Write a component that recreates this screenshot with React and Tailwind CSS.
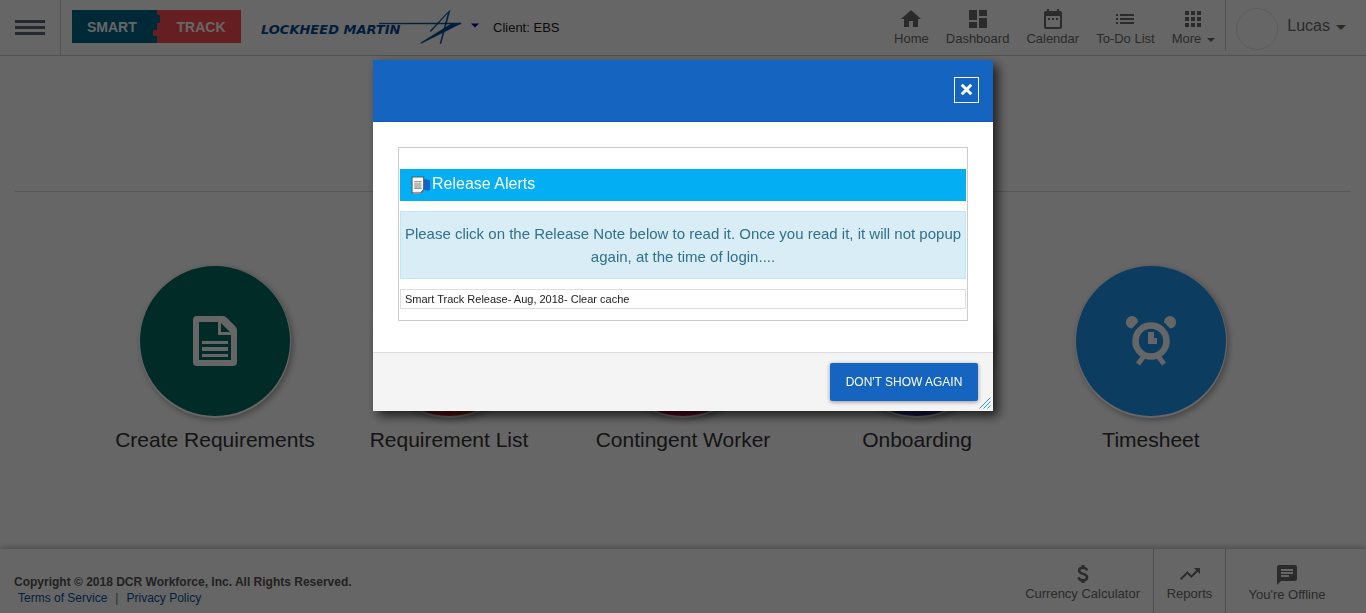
import React from "react";
import {
  MdHome,
  MdDashboard,
  MdDateRange,
  MdList,
  MdApps,
  MdTrendingUp,
  MdChat,
} from "react-icons/md";

const NAV = [
  { label: "Home", Icon: MdHome },
  { label: "Dashboard", Icon: MdDashboard },
  { label: "Calendar", Icon: MdDateRange },
  { label: "To-Do List", Icon: MdList },
  { label: "More", Icon: MdApps, caret: true },
];

function Caret({ className = "" }) {
  return (
    <svg viewBox="0 0 10 5" className={className} aria-hidden="true">
      <path d="M0 0h10L5 5z" fill="currentColor" />
    </svg>
  );
}

function SmartTrackLogo() {
  return (
    <a href="#home" className="grid h-[33px] w-[169px] text-sm font-bold text-white">
      <svg viewBox="0 0 169 33" className="col-start-1 row-start-1 h-[33px] w-[169px]" aria-hidden="true">
        <path d="M0 0h169v33H0z" fill="#ff4e52" />
        <path d="M0 0h85v5h3v8h-3v7h-4v6h4v7H0z" fill="#00688c" />
      </svg>
      <span className="col-start-1 row-start-1 grid grid-cols-2 items-center">
        <span className="pl-[15px]">SMART</span>
        <span className="pl-5">TRACK</span>
      </span>
    </a>
  );
}

function LockheedLogo() {
  return (
    <div className="ml-5 flex h-[54px] items-center text-[#004b93]">
      <span className="mt-1 w-[166px] whitespace-nowrap font-['DejaVu_Sans'] text-[13px] leading-4 font-bold italic">
        LOCKHEED MARTIN
      </span>
      <svg viewBox="0 0 84 36" className="-ml-[48px] h-9 w-[84px] shrink-0" aria-hidden="true">
        <path
          d="M0 13.2L82 13v1L0 13.900z M82 13.400L42 33.500L41.500 33L72 14z M71 0.500L52 21.500L51 21L67 4z M71 0.500L62 33.500H61L69 3.500z"
          fill="currentColor"
          stroke="currentColor"
          strokeWidth="0.500"
        />
      </svg>
    </div>
  );
}

function DollarIcon({ className }) {
  return (
    <svg viewBox="0 0 24 24" className={className} fill="none" stroke="currentColor" aria-hidden="true">
      <path d="M16 8.500C15.600 6.800 14.200 5.700 12 5.700c-2.400 0-3.900 1.100-3.900 2.900 0 4.300 8 2.300 8 6.700 0 1.900-1.600 3-4.100 3-2.600 0-4.200-1.200-4.500-3.100" strokeWidth="2.500" />
      <path d="M12 3v3M12 18v3" strokeWidth="3" />
    </svg>
  );
}

function DocIcon() {
  return (
    <svg viewBox="0 0 44 50" className="h-[50px] w-11" aria-hidden="true">
      <path
        fill="#fff"
        fillRule="evenodd"
        d="M4 0h26q2 0 4 2l8 8q2 2 2 4v32q0 4-4 4H4q-4 0-4-4V4q0-4 4-4zM6 6v38h32V19H25V6zM28 7v9h9z"
      />
      <path fill="#fff" d="M9 25h26v3H9zM9 31h26v4H9zM9 38h26v3H9z" />
    </svg>
  );
}

function ClockIcon() {
  return (
    <svg viewBox="0 0 50 50" className="size-[50px]" aria-hidden="true">
      <circle cx="25" cy="25" r="15.500" fill="none" stroke="#fff" strokeWidth="6.500" />
      <path d="M0 6a6 6 0 0 1 12 0L6 12.500A6 6 0 0 1 0 6zM38 6a6 6 0 0 1 12 0 6 6 0 0 1-6 6.500z" fill="#fff" />
      <path d="M22 16h6v6h3v6h-9z" fill="#fff" />
      <path d="M18 40l-6 8M32 40l6 8" stroke="#fff" strokeWidth="5" />
    </svg>
  );
}

const TILES = [
  { label: "Create Requirements", color: "bg-[#006b62]", Icon: DocIcon },
  { label: "Requirement List", color: "bg-[#d32f2f]", Icon: DocIcon },
  { label: "Contingent Worker", color: "bg-[#c2185b]", Icon: DocIcon },
  { label: "Onboarding", color: "bg-[#303f9f]", Icon: DocIcon },
  { label: "Timesheet", color: "bg-[#1e96ee]", Icon: ClockIcon },
];

function Header() {
  return (
    <header className="flex h-14 items-center border-b border-[#ccc] bg-white">
      <button type="button" aria-label="Menu" className="flex h-[55px] w-[61px] flex-col gap-[3px] border-r border-[#ccc] pt-5 pl-[15px]">
        <span className="h-[3px] w-[30px] bg-[#5c6474]" />
        <span className="h-[3px] w-[30px] bg-[#5c6474]" />
        <span className="h-[3px] w-[30px] bg-[#5c6474]" />
      </button>
      <div className="pb-[2px] pl-[11px]">
        <SmartTrackLogo />
      </div>
      <LockheedLogo />
      <Caret className="mb-1 ml-2 h-[5px] w-2 text-[#0000b8]" />
      <span className="ml-[14px] text-[13px] text-[#222]">Client: EBS</span>
      <nav className="ml-auto flex h-[50px] gap-[17px] self-start border-r border-[#ccc] pr-[10px] text-[13px] text-[#6b6b6b]">
        {NAV.map(({ label, Icon, caret }) => (
          <a key={label} href={"#" + label.toLowerCase()} className="flex flex-col items-center pt-[7px]">
            <Icon className="size-6" />
            <span className="flex items-center leading-4">
              {label}
              {caret && <Caret className="mt-[2px] ml-[6px] h-1 w-2" />}
            </span>
          </a>
        ))}
      </nav>
      <span className="mt-[2px] ml-[10px] size-[42px] rounded-full border border-[#e6e6e6]" />
      <button type="button" className="mr-5 mb-1 ml-[9px] flex items-center text-base text-[#6b6b6b]">
        Lucas
        <Caret className="mt-1 ml-[6px] h-[5px] w-[10px]" />
      </button>
    </header>
  );
}

function Footer() {
  const item = "flex flex-col items-center text-[13px] leading-4";
  return (
    <footer className="flex h-16 bg-white text-[#6b6b6b] shadow-[0_-1px_6px_rgba(0,0,0,0.3)]">
      <div className="pt-[25px] pl-[14px] text-xs leading-4">
        <p className="font-bold text-[#555]">Copyright © 2018 DCR Workforce, Inc. All Rights Reserved.</p>
        <p className="pl-1">
          <a href="#terms" className="text-[#0e4f9e]">Terms of Service</a>
          <span className="mx-2">|</span>
          <a href="#privacy" className="text-[#0e4f9e]">Privacy Policy</a>
        </p>
      </div>
      <a href="#currency" className={item + " ml-auto pt-[13px] pr-[13px]"}>
        <DollarIcon className="size-6" />
        Currency Calculator
      </a>
      <a href="#reports" className={item + " w-[72px] border-l border-[#bbb] pt-[13px]"}>
        <MdTrendingUp className="size-6" />
        Reports
      </a>
      <a href="#chat" className={item + " w-[141px] border-l border-[#bbb] pt-[14px] pr-[18px]"}>
        <MdChat className="size-6" />
        You're Offline
      </a>
    </footer>
  );
}

function ReleaseIcon() {
  return (
    <svg viewBox="0 0 18 18" className="size-[19px]" aria-hidden="true">
      <path d="M11 3h3l4 1v9l-3 1-4-2z" fill="#1663c7" />
      <path d="M1 1h11v12l-3 3H1z" fill="#fff" stroke="#47606e" />
      <path d="M2 15h7v2H2z" fill="#999" />
      <path d="M3 5.500h7M3 7.500h7M3 9.500h7M3 11.500h7" stroke="#777" />
    </svg>
  );
}

function ReleaseDialog() {
  return (
    <div className="fixed inset-0 flex items-start justify-center bg-black/60 pt-[60px]">
      <section
        role="dialog"
        aria-modal="true"
        aria-label="Release Alerts"
        className="relative w-full max-w-[620px] bg-white shadow-[5px_5px_10px_rgba(0,0,0,0.7)]"
      >
        <header className="flex h-[62px] items-start justify-end border-b border-[#0f58b5] bg-[#1565c0] pt-[17px] pr-[14px]">
          <button type="button" aria-label="Close" className="flex h-[26px] w-[25px] items-center justify-center border border-white">
            <svg viewBox="0 0 11 11" className="mb-px size-[13px]" aria-hidden="true">
              <path d="M1.500 1.500l8 8M9.500 1.500l-8 8" stroke="#fff" strokeWidth="2.500" />
            </svg>
          </button>
        </header>
        <div className="px-[25px] pt-[25px] pb-[31px]">
          <div className="border border-[#ccc] px-px pt-[21px] pb-[11px]">
            <h1 className="flex h-8 items-center bg-[#03aef2] pl-[11px] text-base text-white">
              <ReleaseIcon />
              <span className="mb-[3px] ml-[2px]">Release Alerts</span>
            </h1>
            <p className="mt-[10px] border border-[#bce8f1] bg-[#d9edf7] py-[10px] text-center text-[15px] leading-[23px] text-[#31708f]">
              Please click on the Release Note below to read it. Once you read it, it will not popup again, at the time of login....
            </p>
            <a href="#release" className="mt-[10px] block border border-[#ddd] px-1 text-[11px] leading-[18px] text-[#222]">
              Smart Track Release- Aug, 2018- Clear cache
            </a>
          </div>
        </div>
        <footer className="flex h-[59px] items-center justify-end border-t border-[#ddd] bg-[#f4f4f4] pr-[15px]">
          <button type="button" className="h-[38px] w-[148px] rounded-[2px] bg-[#1565c0] text-xs text-white shadow-[0_1px_4px_rgba(0,0,0,0.4)]">
            DON'T SHOW AGAIN
          </button>
        </footer>
        <svg viewBox="0 0 12 12" className="absolute right-[2px] bottom-[2px] size-3 text-[#3a8fd6]" aria-hidden="true">
          <path d="M0.500 11.500l11-11M4.500 11.500l7-7M8.500 11.500l3-3" fill="none" stroke="currentColor" />
        </svg>
      </section>
    </div>
  );
}

export default function App() {
  return (
    <div className="flex min-h-screen flex-col bg-white font-['Liberation_Sans',Arial,sans-serif]">
      <Header />
      <main className="flex-1">
        <hr className="mx-[15px] mt-[135px] border-t border-[#d6d6d6]" />
        <ul className="mx-auto mt-[74px] grid max-w-[1170px] grid-cols-5">
          {TILES.map(({ label, color, Icon }) => (
            <li key={label}>
              <a href="#tile" className="flex flex-col items-center text-[21px] text-[#333]">
                <span
                  className={
                    "flex size-[150px] items-center justify-center rounded-full shadow-[0_1px_0_1px_#fff,2px_3px_6px_1px_rgba(0,0,0,0.35)] " + color
                  }
                >
                  <Icon />
                </span>
                <span className="mt-[10px] leading-7">{label}</span>
              </a>
            </li>
          ))}
        </ul>
      </main>
      <Footer />
      <ReleaseDialog />
    </div>
  );
}
